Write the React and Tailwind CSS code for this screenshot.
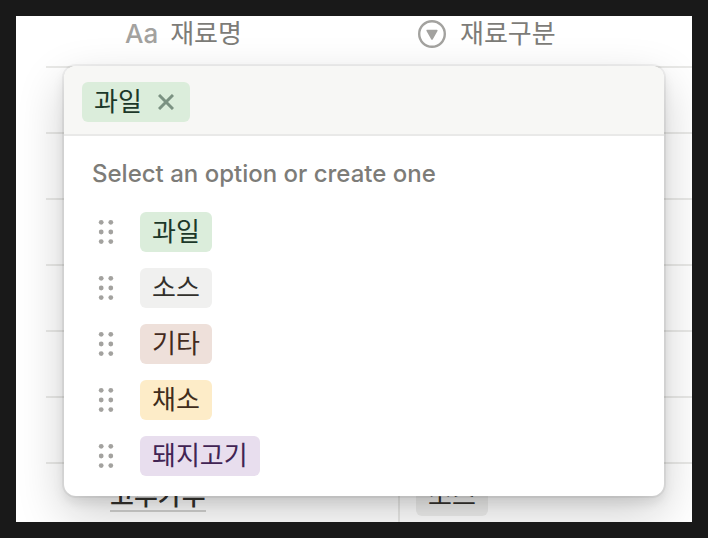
import { useState } from "react";

const OPTIONS = [
  { name: "과일", style: "bg-[#dbeddb] text-[#1c3829]" },
  { name: "소스", style: "bg-[#f0f0ef] text-[#32302c]" },
  { name: "기타", style: "bg-[#eee0da] text-[#442a1e]" },
  { name: "채소", style: "bg-[#fdecc8] text-[#402c1b]" },
  { name: "돼지고기", style: "bg-[#e8deee] text-[#412454]" },
];

const ROWS = [
  { name: "", kind: "" },
  { name: "", kind: "" },
  { name: "", kind: "" },
  { name: "", kind: "" },
  { name: "", kind: "" },
  { name: "", kind: "" },
  { name: "고추가루", kind: "소스" },
];

const TAG = "inline-flex h-10 items-center rounded-md px-3 text-[26px] leading-10 whitespace-nowrap";

function SelectIcon() {
  return (
    <svg viewBox="0 0 28 28" className="size-7 shrink-0 text-[#a3a29f]" aria-hidden="true">
      <circle cx="14" cy="14" r="12.8" fill="none" stroke="currentColor" strokeWidth="2.4" />
      <path
        d="M9.2 10.5h9.6L14 19z"
        fill="currentColor"
        stroke="currentColor"
        strokeWidth="1.6"
        strokeLinejoin="round"
      />
    </svg>
  );
}

function DragHandle() {
  return (
    <svg viewBox="0 0 16 26" className="h-[26px] w-4" fill="#a3a29f" aria-hidden="true">
      {[3.3, 13, 22.6].map((y) => (
        <g key={y}>
          <circle cx="3.2" cy={y} r="2.4" />
          <circle cx="12.8" cy={y} r="2.4" />
        </g>
      ))}
    </svg>
  );
}

function IngredientTable() {
  return (
    <div className="pl-[30px]">
      <table className="w-full table-fixed border-separate border-spacing-0">
        <thead className="text-[26px] leading-9 text-[#7d7c78]">
          <tr>
            <th className="h-[52px] w-[354px] border-b-2 border-[#e9e9e7] p-0 pl-[79px] text-left align-top font-normal">
              <span className="flex items-center gap-3">
                <span className="font-medium text-[#a3a29f]">Aa</span>
                재료명
              </span>
            </th>
            <th className="h-[52px] border-b-2 border-[#e9e9e7] p-0 pl-[18px] text-left align-top font-normal">
              <span className="flex items-center gap-3.5">
                <SelectIcon />
                재료구분
              </span>
            </th>
          </tr>
        </thead>
        <tbody className="text-[26px] text-[#32302c]">
          {ROWS.map((row, i) => (
            <tr key={i}>
              <td className="h-[66px] border-r-2 border-b-2 border-[#e9e9e7] p-0 pt-3 pl-16 align-top">
                {row.name && (
                  <span className="block h-9 w-fit border-b-2 border-[#d3d3d1] leading-10 font-medium">
                    {row.name}
                  </span>
                )}
              </td>
              <td className="h-[66px] border-b-2 border-[#e9e9e7] p-0 pt-3 pl-4 align-top">
                {row.kind && <span className={`${TAG} bg-[#efefee] text-[#32302c]`}>{row.kind}</span>}
              </td>
            </tr>
          ))}
        </tbody>
      </table>
    </div>
  );
}

function SelectMenu() {
  const [selected, setSelected] = useState("과일");
  const current = OPTIONS.find((o) => o.name === selected);

  return (
    <div className="absolute top-[50px] right-7 left-12 overflow-hidden rounded-xl bg-white shadow-[0_0_0_2px_rgba(15,15,15,0.05),0_6px_12px_rgba(15,15,15,0.1),0_18px_48px_rgba(15,15,15,0.2)]">
      <div className="flex min-h-[70px] items-start border-b-2 border-[#e9e9e8] bg-[#f7f7f5] px-[18px] pt-4 pb-3">
        {current && (
          <span className={`${TAG} ${current.style}`}>
            {current.name}
            <button
              type="button"
              aria-label="Remove"
              onClick={() => setSelected("")}
              className="ml-4 pr-1 text-[#1c3829]/50"
            >
              <svg viewBox="0 0 16 16" className="size-4" fill="none" stroke="currentColor" strokeWidth="3">
                <path d="M1 1 15 15M15 1 1 15" />
              </svg>
            </button>
          </span>
        )}
        <input
          type="text"
          aria-label="Search for an option"
          className="h-10 min-w-0 flex-1 bg-transparent px-3 text-[26px] outline-none"
        />
      </div>
      <div className="pt-5 pb-3">
        <p className="mb-3 px-7 text-2xl leading-9 font-medium text-[#7d7c78]">
          Select an option or create one
        </p>
        <ul>
          {OPTIONS.map((option) => (
            <li key={option.name} className="flex h-14 items-center gap-[26px] px-[34px]">
              <DragHandle />
              <button
                type="button"
                onClick={() => setSelected(option.name)}
                className={`${TAG} ${option.style}`}
              >
                {option.name}
              </button>
            </li>
          ))}
        </ul>
      </div>
    </div>
  );
}

export default function App() {
  return (
    <div className="h-screen bg-[#191919] p-4 font-['Inter','Noto_Sans_CJK_KR',sans-serif]">
      <main className="relative h-full overflow-hidden bg-white">
        <IngredientTable />
        <SelectMenu />
      </main>
    </div>
  );
}
